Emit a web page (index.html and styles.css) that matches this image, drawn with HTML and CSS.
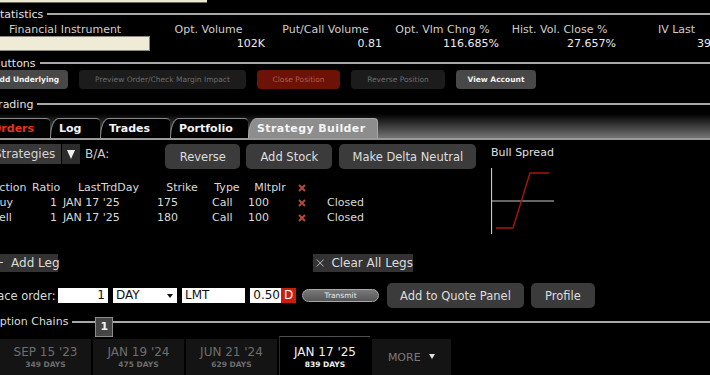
FILE: index.html
```html
<!DOCTYPE html>
<html lang="en">
<head>
    <meta charset="UTF-8">
    <meta name="viewport" content="width=device-width, initial-scale=1.0">
    <title>Strategy Builder</title>
    <link rel="stylesheet" href="styles.css">
</head>
<body>
    <div class="top-strip"></div>

    <div class="group-head lead"><span>Statistics</span></div>
    <div class="stats">
        <div class="stat-label first">Financial Instrument</div>
        <div class="stat-label">Opt. Volume</div>
        <div class="stat-label">Put/Call Volume</div>
        <div class="stat-label">Opt. Vlm Chng %</div>
        <div class="stat-label">Hist. Vol. Close %</div>
        <div class="stat-label">IV Last</div>
        <div class="instrument-box"></div>
        <div class="stat-value">102K</div>
        <div class="stat-value">0.81</div>
        <div class="stat-value">116.685%</div>
        <div class="stat-value">27.657%</div>
        <div class="stat-value last">39.412%</div>
    </div>

    <div class="group-head"><span>Buttons</span></div>
    <div class="button-row">
        <button class="mini on first">Add Underlying</button>
        <button class="mini off preview">Preview Order/Check Margin Impact</button>
        <button class="mini danger close">Close Position</button>
        <button class="mini off reverse">Reverse Position</button>
        <button class="mini on account">View Account</button>
    </div>

    <div class="group-head"><span>Trading</span></div>
    <div class="tabbar">
        <div class="tab orders">Orders</div>
        <div class="tab log">Log</div>
        <div class="tab trades">Trades</div>
        <div class="tab portfolio">Portfolio</div>
        <div class="tab builder active">Strategy Builder</div>
    </div>

    <div class="builder-area">
        <div class="builder-left">
            <div class="control-row">
                <div class="strategies">Strategies</div>
                <div class="drop-btn"><span class="tri-down"></span></div>
                <div class="ba">B/A:</div>
                <button class="btn reverse-btn">Reverse</button>
                <button class="btn stock-btn">Add Stock</button>
                <button class="btn delta-btn">Make Delta Neutral</button>
            </div>

            <div class="legs">
                <div class="leg-row head">
                    <div>Action</div>
                    <div class="num">Ratio</div>
                    <div class="mid">LastTrdDay</div>
                    <div class="mid">Strike</div>
                    <div class="mid">Type</div>
                    <div class="mid">Mltplr</div>
                    <div class="x-cell"><svg class="x-red" viewBox="0 0 8 8"><path d="M1 1L7 7M7 1L1 7"/></svg></div>
                    <div></div>
                </div>
                <div class="leg-row">
                    <div>Buy</div>
                    <div class="num">1</div>
                    <div class="day">JAN 17 '25</div>
                    <div>175</div>
                    <div class="type">Call</div>
                    <div class="mult">100</div>
                    <div class="x-cell"><svg class="x-red" viewBox="0 0 8 8"><path d="M1 1L7 7M7 1L1 7"/></svg></div>
                    <div class="status">Closed</div>
                </div>
                <div class="leg-row">
                    <div>Sell</div>
                    <div class="num">1</div>
                    <div class="day">JAN 17 '25</div>
                    <div>180</div>
                    <div class="type">Call</div>
                    <div class="mult">100</div>
                    <div class="x-cell"><svg class="x-red" viewBox="0 0 8 8"><path d="M1 1L7 7M7 1L1 7"/></svg></div>
                    <div class="status">Closed</div>
                </div>
            </div>
        </div>

        <div class="chart">
            <div class="chart-title">Bull Spread</div>
            <svg width="70" height="76" viewBox="0 0 70 76">
                <line x1="0.5" y1="8" x2="0.5" y2="74" stroke="#c8c8c8" stroke-width="1.2"/>
                <line x1="0" y1="41" x2="63" y2="41" stroke="#c8c8c8" stroke-width="1.2"/>
                <polyline points="5,68 22,68 39,13 58,13" fill="none" stroke="#a3180a" stroke-width="1.4"/>
            </svg>
        </div>
    </div>

    <div class="leg-actions">
        <div class="flat-btn add-leg"><span class="plus">+</span>Add Leg</div>
        <div class="flat-btn clear-legs">
            <svg class="x-thin" viewBox="0 0 12 12"><path d="M1 1L11 11M11 1L1 11"/></svg>
            Clear All Legs
        </div>
    </div>

    <div class="order-row">
        <div class="order-label">Place order:</div>
        <div class="field qty">1</div>
        <div class="field tif">DAY<span class="tri-small"></span></div>
        <div class="field otype">LMT</div>
        <div class="field price">0.50</div>
        <div class="d-flag">D</div>
        <div class="transmit">Transmit</div>
        <button class="btn quote-btn">Add to Quote Panel</button>
        <button class="btn profile-btn">Profile</button>
    </div>

    <div class="chains-head">
        <span class="chains-label">Option Chains</span>
        <span class="rule short"></span>
        <span class="badge">1</span>
        <span class="rule long"></span>
    </div>

    <div class="expiries">
        <div class="expiry">
            <div class="exp-date">SEP 15 '23</div>
            <div class="exp-days">349 DAYS</div>
        </div>
        <div class="expiry">
            <div class="exp-date">JAN 19 '24</div>
            <div class="exp-days">475 DAYS</div>
        </div>
        <div class="expiry">
            <div class="exp-date">JUN 21 '24</div>
            <div class="exp-days">629 DAYS</div>
        </div>
        <div class="expiry active">
            <div class="exp-date">JAN 17 '25</div>
            <div class="exp-days">839 DAYS</div>
        </div>
        <div class="expiry more">MORE <span class="tri-more"></span></div>
    </div>
</body>
</html>
```

FILE: styles.css
```css
:root {
    --bg: #000;
    --text: #dcdcdc;
    --muted: #7a7a7a;
    --rule: #a8a8a8;
    --btn: #3b3b3b;
    --btn-dim: #1c1c1c;
    --red: #c81e0c;
}

body {
    margin: 0;
    width: 710px;
    height: 375px;
    overflow: hidden;
    background: var(--bg);
    color: var(--text);
    font-family: 'DejaVu Sans', Verdana, sans-serif;
    font-size: 11px;
}

button {
    font-family: inherit;
    border: none;
    padding: 0;
    cursor: pointer;
}

.top-strip {
    width: 207px;
    height: 2px;
    background: #ece8d0;
    border-bottom: 1px solid #6a6a62;
}

/* section headers with a rule */
.group-head {
    display: flex;
    align-items: center;
    height: 14px;
    margin-left: -7px;
    color: #e4e4e4;
}

.group-head::after {
    content: "";
    flex: 1;
    height: 2px;
    margin-left: 4px;
    background: var(--rule);
}

.group-head.lead {
    margin-top: 3px;
    height: 16px;
}

/* statistics */
.stats {
    display: grid;
    grid-template-columns: 150px repeat(5, 117px);
    grid-template-rows: 14px 15px;
    align-items: center;
    margin-bottom: 5px;
}

.stat-label {
    text-align: center;
    color: #cfcfcf;
    white-space: nowrap;
}

.stat-label.first {
    text-align: left;
    padding-left: 9px;
}

.instrument-box {
    height: 13px;
    margin-left: -5px;
    background: #efebd6;
    border: 1px solid #8a887c;
}

.stat-value {
    text-align: right;
    padding-right: 2px;
    color: #ececec;
}

.stat-value.last {
    text-align: left;
    padding-left: 79px;
}

/* small buttons */
.button-row {
    display: flex;
    gap: 11px;
    height: 19px;
    margin-bottom: 8px;
}

.mini {
    height: 19px;
    border-radius: 4px;
    font-size: 7.5px;
    white-space: nowrap;
}

.mini.on {
    background: #484848;
    color: #f2f2f2;
    font-weight: bold;
}

.mini.off {
    background: var(--btn-dim);
    color: #6c6c6c;
}

.mini.danger {
    background: #6c1206;
    color: #b35a4c;
}

.mini.first { width: 83px; margin-left: -15px; }
.mini.preview { width: 167px; }
.mini.close { width: 83px; }
.mini.reverse { width: 94px; }
.mini.account { width: 80px; }

/* trading tabs */
.tabbar {
    display: flex;
    align-items: flex-end;
    height: 27px;
    margin-left: -20px;
    background: linear-gradient(#000 10%, #747474);
    border-bottom: 2px solid #9a9a9a;
}

.tab {
    box-sizing: border-box;
    height: 20px;
    line-height: 19px;
    padding-left: 8px;
    background: #000;
    border: 1px solid #8a8a8a;
    border-bottom: none;
    border-right: none;
    border-radius: 9px 4px 0 0 / 18px 4px 0 0;
    color: #f4f4f4;
    font-weight: bold;
    white-space: nowrap;
}

.tab.orders { width: 70px; padding-left: 11px; color: #e2361a; }
.tab.log { width: 50px; }
.tab.trades { width: 70px; }
.tab.portfolio { width: 78px; }

.tab.builder {
    width: 130px;
    background: #8d8d8d;
    border-color: #a8a8a8;
    border-right: 1px solid #a8a8a8;
    letter-spacing: 0.4px;
}

/* strategy builder */
.builder-area {
    display: flex;
    margin-top: 4px;
}

.builder-left {
    width: 485px;
}

.control-row {
    display: flex;
    align-items: flex-start;
    height: 25px;
}

.strategies {
    height: 20px;
    line-height: 20px;
    width: 64px;
    margin-left: -3px;
    background: #383838;
    color: #d4d4d4;
    font-size: 12px;
    text-indent: -3px;
    overflow: hidden;
}

.drop-btn {
    display: flex;
    align-items: center;
    justify-content: center;
    width: 18px;
    height: 20px;
    margin-left: 1px;
    background: #2c2c2c;
}

.tri-down {
    width: 0;
    height: 0;
    border-left: 4px solid transparent;
    border-right: 4px solid transparent;
    border-top: 9px solid #f0f0f0;
}

.ba {
    margin-left: 5px;
    line-height: 20px;
    font-size: 12px;
    color: #cfcfcf;
}

.btn {
    height: 25px;
    border-radius: 5px;
    background: var(--btn);
    color: #dedede;
    font-size: 11.5px;
    white-space: nowrap;
}

.reverse-btn { width: 75px; margin-left: 56px; }
.stock-btn { width: 86px; margin-left: 6px; }
.delta-btn { width: 137px; margin-left: 7px; }

.legs {
    margin-top: 11px;
    margin-left: -8px;
}

.leg-row {
    display: grid;
    grid-template-columns: 40px 28px 97px 50px 40px 46px 17px auto;
    height: 15px;
    line-height: 15px;
    color: #dadada;
    white-space: nowrap;
}

.leg-row .num { text-align: right; padding-right: 3px; }
.leg-row .mid { text-align: center; }
.leg-row .day { padding-left: 3px; }
.leg-row .type { padding-left: 5px; }
.leg-row .mult { padding-left: 1px; }
.leg-row .status { padding-left: 17px; }

.x-cell {
    display: flex;
    align-items: center;
    justify-content: center;
}

.x-red {
    width: 8px;
    height: 8px;
    stroke: #b04a3c;
    stroke-width: 2;
}

.chart {
    margin-left: 6px;
}

.chart-title {
    height: 14px;
    line-height: 14px;
    margin-top: 2px;
    color: #e0e0e0;
}

.chart svg {
    display: block;
}

/* legs actions */
.leg-actions {
    display: flex;
    margin-top: 18px;
    height: 18px;
}

.flat-btn {
    display: flex;
    align-items: center;
    height: 18px;
    background: #333;
    color: #dcdcdc;
    font-size: 12px;
    white-space: nowrap;
}

.add-leg {
    width: 66px;
    margin-left: -8px;
}

.plus {
    margin-left: 2px;
    margin-right: 7px;
}

.clear-legs {
    width: 100px;
    margin-left: 255px;
}

.x-thin {
    width: 12px;
    height: 12px;
    margin: 0 7px 0 3px;
    stroke: #d0d0d0;
    stroke-width: 1.2;
}

/* order entry */
.order-row {
    display: flex;
    align-items: center;
    height: 25px;
    margin-top: 11px;
}

.order-label {
    width: 71px;
    margin-left: -13px;
    font-size: 11.5px;
    color: #dadada;
    white-space: nowrap;
}

.field {
    box-sizing: border-box;
    height: 15px;
    line-height: 15px;
    background: #fff;
    color: #111;
    font-size: 12px;
    padding: 0 3px;
}

.field.qty { width: 50px; text-align: right; }
.field.tif { width: 64px; margin-left: 5px; position: relative; }
.field.otype { width: 63px; margin-left: 5px; }
.field.price { width: 31px; margin-left: 5px; text-align: right; padding-right: 1px; }

.tri-small {
    position: absolute;
    right: 4px;
    top: 6px;
    border-left: 3px solid transparent;
    border-right: 3px solid transparent;
    border-top: 4px solid #111;
}

.d-flag {
    width: 15px;
    height: 15px;
    line-height: 15px;
    background: var(--red);
    color: #fff;
    font-size: 12px;
    text-align: center;
}

.transmit {
    box-sizing: border-box;
    width: 77px;
    height: 13px;
    line-height: 11px;
    margin-left: 6px;
    border: 1px solid #a8a8a8;
    border-radius: 7px;
    background: linear-gradient(#7a7a7a, #555);
    color: #e8e8e8;
    font-size: 7.5px;
    text-align: center;
}

.quote-btn { width: 137px; margin-left: 8px; }
.profile-btn { width: 64px; margin-left: 7px; }

/* option chains */
.chains-head {
    display: flex;
    align-items: flex-start;
    height: 22px;
    margin-top: 7px;
}

.chains-label {
    margin-left: -9px;
    line-height: 14px;
    color: #dcdcdc;
    white-space: nowrap;
}

.rule {
    height: 2px;
    margin-top: 6px;
    background: var(--rule);
}

.rule.short {
    width: 23px;
    margin-left: 4px;
}

.rule.long {
    flex: 1;
}

.badge {
    box-sizing: border-box;
    width: 18px;
    height: 20px;
    line-height: 18px;
    margin-top: 2px;
    background: #454545;
    border: 1px solid #8c8c8c;
    color: #f0f0f0;
    font-weight: bold;
    text-align: center;
}

.expiries {
    display: flex;
    align-items: flex-start;
    gap: 2px;
    margin-top: -1px;
}

.expiry {
    box-sizing: border-box;
    width: 91px;
    height: 40px;
    margin-top: 3px;
    padding-top: 6px;
    background: #141414;
    text-align: center;
    color: #6e6e6e;
}

.exp-date {
    line-height: 14px;
    font-size: 12px;
}

.exp-days {
    line-height: 12px;
    font-size: 7.5px;
    font-weight: bold;
}

.expiry.active {
    margin-top: 0;
    height: 43px;
    padding-top: 8px;
    background: #000;
    border-top: 1px solid #4e4e4e;
    border-left: 1px solid #2a2a2a;
    color: #f2f2f2;
}

.expiry.more {
    width: 79px;
    padding-top: 12px;
    font-size: 11px;
    color: #7a7a7a;
}

.tri-more {
    display: inline-block;
    margin-left: 5px;
    vertical-align: 2px;
    border-left: 3px solid transparent;
    border-right: 3px solid transparent;
    border-top: 5px solid #e0e0e0;
}
```
